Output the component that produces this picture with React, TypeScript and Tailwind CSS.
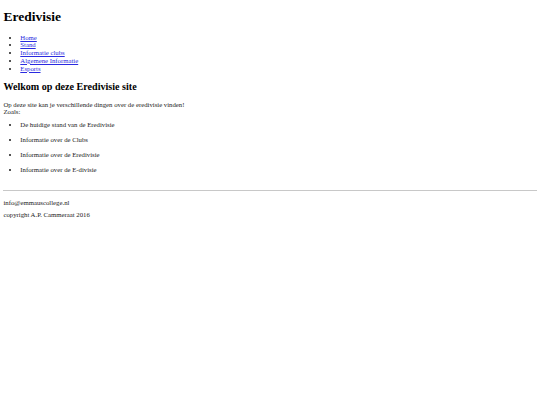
import React from "react";

const navLinks = ["Home", "Stand", "Informatie clubs", "Algemene Informatie", "Esports"];

const topics = [
  "De huidige stand van de Eredivisie",
  "Informatie over de Clubs",
  "Informatie over de Eredivisie",
  "Informatie over de E-divisie",
];

export default function App() {
  return (
    <div className="min-h-[405px] bg-white px-[3.4px] py-[0.1px] font-['Liberation_Serif',serif] text-[6.75px] leading-[1.15] text-[#1a1a1a]">
      <h1 className="my-[9px] text-[13.5px] font-bold leading-[1.15] text-black">Eredivisie</h1>

      <ul className="my-[6.75px] list-disc pl-[16.9px]">
        {navLinks.map((l) => (
          <li key={l}>
            <a href="#" className="text-[#2a2ae0] underline">
              {l}
            </a>
          </li>
        ))}
      </ul>

      <h2 className="my-[8.4px] text-[10.1px] font-bold leading-[1.15] text-black">
        Welkom op deze Eredivisie site
      </h2>

      <p className="mt-[6.75px] mb-[4.6px]">
        Op deze site kan je verschillende dingen over de eredivisie vinden!
        <br />
        Zoals:
      </p>

      <ul className="my-[4.6px] list-disc pl-[16.9px]">
        {topics.map((t) => (
          <li key={t} className="mt-[7.3px] first:mt-0">
            <p>{t}</p>
          </li>
        ))}
      </ul>

      <hr className="mt-[16.5px] mb-[8px] border-t border-[#c8c8c8]" />

      <p className="my-[3.9px]">info@emmauscollege.nl</p>
      <p className="my-[3.9px]">copyright A.P. Cammeraat 2016</p>
    </div>
  );
}
